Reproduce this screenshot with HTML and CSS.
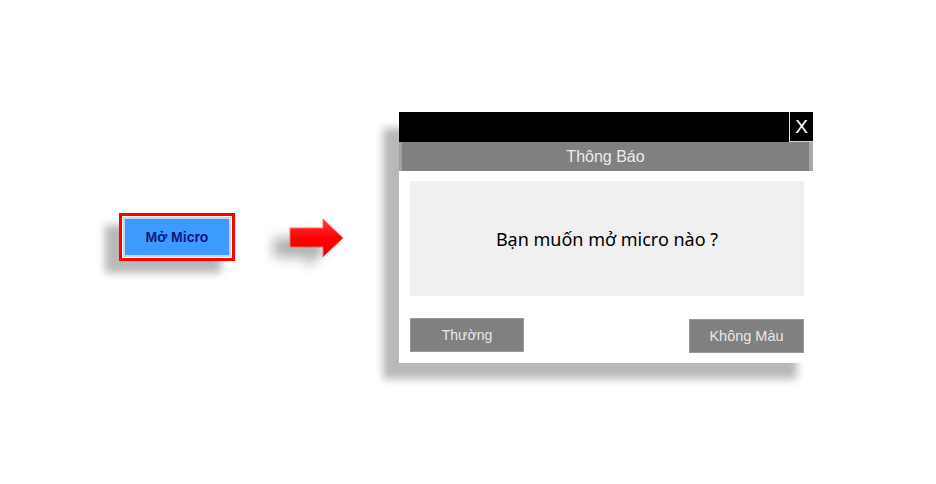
FILE: index.html
```html
<!DOCTYPE html>
<html>
<head>
    <title>Mở Micro</title>
    <link rel="stylesheet" href="styles.css">
</head>
<body>
    <div class="scene">
        <div class="mic-frame">
            <button class="mic-btn">Mở Micro</button>
        </div>

        <svg class="arrow" width="55" height="40" viewBox="0 0 55 40">
            <defs>
                <linearGradient id="arrowFill" x1="0" y1="0" x2="0" y2="1">
                    <stop offset="0" stop-color="#ff3a3a"/>
                    <stop offset="0.5" stop-color="#ff0000"/>
                    <stop offset="1" stop-color="#e80000"/>
                </linearGradient>
            </defs>
            <polygon points="1,10 34,10 34,1 54,20 34,39 34,29 1,29" fill="url(#arrowFill)" stroke="#ff6a6a" stroke-width="1"/>
        </svg>

        <div class="dialog">
            <div class="title-bar">
                <span class="close-btn">X</span>
            </div>
            <div class="dialog-header">Thông Báo</div>
            <div class="dialog-body">
                <div class="message">Bạn muốn mở micro nào ?</div>
                <div class="actions">
                    <button class="action-btn">Thường</button>
                    <button class="action-btn right">Không Màu</button>
                </div>
            </div>
        </div>
    </div>
</body>
</html>
```

FILE: styles.css
```css
html, body {
    margin: 0;
    padding: 0;
    background: #ffffff;
    font-family: 'Liberation Sans', Arial, sans-serif;
}

body {
    min-height: 100vh;
}

.scene {
    display: flex;
    align-items: flex-start;
    padding-left: 119px;
    padding-bottom: 60px;
}

/* nút mở micro */
.mic-frame {
    margin-top: 213px;
    width: 116px;
    height: 48px;
    box-sizing: border-box;
    border: 3px solid #ff0000;
    background: #ffffff;
    padding: 1px;
    box-shadow: -14px 12px 8px rgba(0, 0, 0, 0.28);
}

.mic-btn {
    width: 100%;
    height: 100%;
    background: #3d9bff;
    border: 2px solid #c9d6e3;
    color: #08187a;
    font-family: 'Liberation Sans', Arial, sans-serif;
    font-weight: bold;
    font-size: 14px;
    padding: 0;
}

.arrow {
    display: block;
    margin-top: 218px;
    margin-left: 54px;
    filter: drop-shadow(-16px 10px 6px rgba(0, 0, 0, 0.3));
}

/* hộp thoại */
.dialog {
    margin-top: 112px;
    margin-left: 55px;
    width: 414px;
    background: #ffffff;
    box-shadow: -16px 16px 8px rgba(0, 0, 0, 0.28);
}

.title-bar {
    height: 30px;
    background: #000000;
    display: flex;
    justify-content: flex-end;
}

.close-btn {
    width: 23px;
    height: 29px;
    border-left: 1px solid #e0e0e0;
    border-bottom: 1px solid #d0d0d0;
    color: #ffffff;
    font-size: 19px;
    line-height: 30px;
    text-align: center;
}

.dialog-header {
    height: 29px;
    line-height: 29px;
    background: #808080;
    border-left: 3px solid #a0a0a0;
    border-right: 4px solid #a8a8a8;
    color: #ececec;
    font-size: 16px;
    text-align: center;
}

.dialog-body {
    padding: 10px 9px 10px 11px;
}

.message {
    height: 115px;
    background: #f0f0f0;
    display: flex;
    align-items: center;
    justify-content: center;
    font-family: 'Noto Sans', 'Open Sans', sans-serif;
    font-size: 18px;
    color: #000000;
}

.actions {
    display: flex;
    justify-content: space-between;
    margin-top: 22px;
}

.action-btn {
    width: 114px;
    height: 34px;
    background: #808080;
    border: 1px solid #9a9a9a;
    color: #e8e8e8;
    font-family: 'Liberation Sans', Arial, sans-serif;
    font-size: 14px;
    padding: 0;
}

.action-btn.right {
    width: 115px;
    margin-top: 1px;
    font-size: 14.5px;
}
```
